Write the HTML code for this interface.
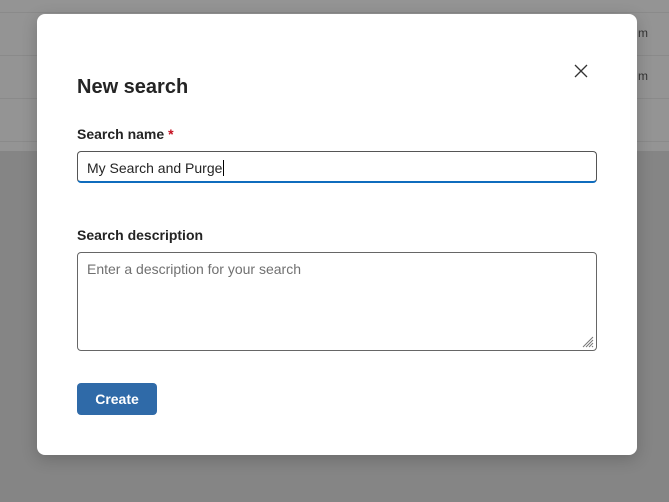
<!DOCTYPE html>
<html><head><style>
body{margin:0;width:669px;height:502px;background:#858585;position:relative;overflow:hidden;font-family:"Liberation Sans",sans-serif;}
.top{position:absolute;left:0;top:0;width:669px;height:151px;background:#949494;}
.ln{position:absolute;left:0;width:669px;height:1px;background:#8a8a8a;}
.m{position:absolute;left:638px;font-size:12px;color:#333;}
.dlg{position:absolute;left:37px;top:14px;width:600px;height:441px;background:#fff;border-radius:8px;box-shadow:0 4px 16px rgba(0,0,0,.2);}
h1{position:absolute;left:40px;top:62px;margin:0;font-size:20px;font-weight:bold;color:#242424;}
.lab{position:absolute;left:40px;font-size:14px;font-weight:bold;color:#242424;}
.in{position:absolute;left:40px;top:137px;width:520px;height:32px;border:1px solid #555;border-bottom:2px solid #0f6cbd;border-radius:4px;box-sizing:border-box;font-size:14px;color:#242424;padding:8px 0 0 9px;}
.ta{position:absolute;left:40px;top:238px;width:520px;height:99px;border:1px solid #666;border-radius:4px;box-sizing:border-box;font-size:14px;color:#707070;padding:8px 9px;}
.btn{position:absolute;left:40px;top:369px;width:80px;height:32px;background:#2f6aa8;border-radius:4px;color:#fff;font-size:14px;font-weight:bold;text-align:center;line-height:33px;}
</style></head><body>
<div class="top"></div>
<div class="ln" style="top:12px"></div><div class="ln" style="top:55px"></div><div class="ln" style="top:98px"></div><div class="ln" style="top:141px"></div>
<div class="m" style="top:26px">m</div><div class="m" style="top:69px">m</div>
<div class="dlg">
<svg style="position:absolute;left:537px;top:50px" width="14" height="14" viewBox="0 0 14 14"><path d="M1 1L13 13M13 1L1 13" stroke="#333" stroke-width="1.3"/></svg>
<h1>New search</h1>
<div class="lab" style="top:112px">Search name <span style="color:#c50f1f">*</span></div>
<div class="in">My Search and Purge<span style="border-left:1px solid #000;margin-left:1px"></span></div>
<div class="lab" style="top:213px">Search description</div>
<div class="ta">Enter a description for your search
<svg style="position:absolute;right:2px;bottom:2px" width="12" height="12" viewBox="0 0 12 12"><path d="M11 1L1 11M11 4L4 11M11 7L7 11M11 10L10 11" stroke="#777" stroke-width="1"/></svg></div>
<div class="btn">Create</div>
</div>
</body></html>
